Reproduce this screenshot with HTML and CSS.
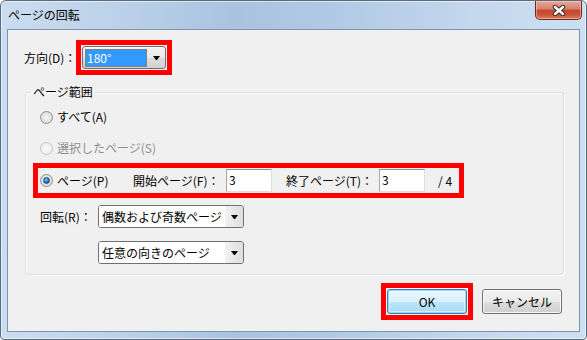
FILE: index.html
```html
<!DOCTYPE html>
<html lang="ja">
<head>
    <meta charset="UTF-8">
    <title>ページの回転</title>
    <link rel="stylesheet" href="styles.css">
</head>
<body>
    <div class="window">
        <div class="titlebar">
            <span class="title">ページの回転</span>
            <div class="close-btn">
                <svg width="16" height="11" viewBox="0 0 16 11">
                    <path d="M4 2 L12 9 M12 2 L4 9" stroke="#3b2a2a" stroke-width="4.4" stroke-linecap="round" fill="none"/>
                    <path d="M4 2 L12 9 M12 2 L4 9" stroke="#ffffff" stroke-width="2.4" stroke-linecap="round" fill="none"/>
                </svg>
            </div>
        </div>
        <div class="client">
            <div class="dir-row">
                <span class="dir-label">方向(D)：</span>
                <div class="mark">
                    <div class="combo combo-focus">
                        <span class="combo-value"><span class="sel">180°</span></span>
                        <span class="combo-arrow"></span>
                    </div>
                </div>
            </div>

            <fieldset class="group">
                <legend>ページ範囲</legend>
                <div class="radio-row">
                    <span class="radio"></span>
                    <span>すべて(A)</span>
                </div>
                <div class="radio-row disabled">
                    <span class="radio"></span>
                    <span>選択したページ(S)</span>
                </div>
                <div class="mark range-mark">
                    <div class="range-row">
                        <span class="radio-item">
                            <span class="radio checked"></span>
                            <span>ページ(P)</span>
                        </span>
                        <span class="field-label">開始ページ(F)：</span>
                        <span class="textbox">3</span>
                        <span class="field-label end-label">終了ページ(T)：</span>
                        <span class="textbox">3</span>
                        <span class="page-total">/ 4</span>
                    </div>
                </div>
                <div class="rot-row">
                    <span class="rot-label">回転(R)：</span>
                    <div class="combo select">
                        <span class="combo-value">偶数および奇数ページ</span>
                        <span class="combo-arrow"></span>
                    </div>
                </div>
                <div class="rot-row rot-row2">
                    <div class="combo select">
                        <span class="combo-value">任意の向きのページ</span>
                        <span class="combo-arrow"></span>
                    </div>
                </div>
            </fieldset>

            <div class="buttons">
                <div class="mark ok-mark">
                    <button class="btn btn-default">OK</button>
                </div>
                <button class="btn">キャンセル</button>
            </div>
        </div>
    </div>
</body>
</html>
```

FILE: styles.css
```css
body {
    margin: 0;
    background: #ffffff;
    font-family: "Noto Sans CJK JP", "Noto Sans", sans-serif;
    font-size: 12px;
    line-height: 16px;
    color: #000;
    white-space: nowrap;
}
.window {
    width: 587px;
    height: 340px;
    box-sizing: border-box;
    display: flex;
    flex-direction: column;
    border: 1px solid #5a6b7e;
    border-radius: 6px 6px 4px 4px;
    background: linear-gradient(to right, #cadcf0 0%, #bdd3ea 18%, #a9c3df 40%, #b3cbe5 60%, #c3d7ed 80%, #cde0f2 100%);
    box-shadow: inset 0 0 0 1px rgba(255, 255, 255, 0.55);
}
.titlebar {
    height: 28px;
    display: flex;
    align-items: flex-start;
    justify-content: space-between;
    padding-left: 7px;
}
.title {
    margin-top: 6px;
}
.close-btn {
    width: 47px;
    height: 19px;
    margin-right: 4px;
    box-sizing: border-box;
    border: 1px solid #6e2a22;
    border-top: none;
    border-radius: 0 0 5px 5px;
    background: linear-gradient(#e6a89a 0%, #d5806c 45%, #c3472f 50%, #c95237 75%, #dc7f5f 100%);
    box-shadow: inset 0 0 0 1px rgba(255, 220, 210, 0.45);
    display: flex;
    align-items: center;
    justify-content: center;
}
.client {
    flex: 1;
    margin: 0 6px 7px;
    border: 1px solid #7f93aa;
    background: #f0f0f0;
    display: flex;
    flex-direction: column;
    padding-top: 10px;
}
.mark {
    border: 5px solid #ff0000;
    padding: 1px;
}
.dir-row {
    display: flex;
    align-items: center;
    padding-left: 16px;
}
.dir-label {
    width: 52px;
    flex-shrink: 0;
}

/* combo boxes */
.combo {
    box-sizing: border-box;
    height: 23px;
    border: 1px solid #707070;
    border-radius: 3px;
    display: flex;
    background: #fff;
    overflow: hidden;
}
.combo-focus {
    width: 84px;
    background: linear-gradient(#f4f4f4, #e9e9e9 50%, #dcdcdc 51%, #d2d2d2);
}
.combo-value {
    flex: 1;
    display: flex;
    align-items: center;
    overflow: hidden;
}
.combo-focus .combo-value {
    padding: 2px 0 1px 2px;
}
.sel {
    flex: 1;
    height: 18px;
    box-sizing: border-box;
    background: #3399ff;
    color: #fff;
    border: 1px dotted #c86a1c;
    padding-left: 1px;
    line-height: 16px;
}
.combo-arrow {
    width: 18px;
    flex-shrink: 0;
    display: flex;
    align-items: center;
    justify-content: center;
}
.combo-arrow::after {
    content: "";
    width: 1px;
    height: 0;
    border-top: 4px solid #000;
    border-left: 3px solid transparent;
    border-right: 3px solid transparent;
}
.select {
    width: 146px;
}
.select .combo-value {
    padding-left: 3px;
    background: #fff;
}
.select .combo-arrow {
    background: linear-gradient(to right, #f2f2f2, #dedede);
}

/* group box */
.group {
    margin: 9px 15px 0 17px;
    padding: 9px 0 10px 7px;
    border: 1px solid #d5dfe5;
    border-radius: 3px;
    box-shadow: 1px 1px 0 #fff, inset 1px 1px 0 #fff;
}
.group legend {
    padding: 0 2px;
    margin-left: -2px;
    line-height: 16px;
}
.radio-row {
    display: flex;
    align-items: center;
    height: 16px;
    padding-left: 7px;
    gap: 4px;
}
.radio-row + .radio-row {
    margin-top: 15px;
}
.radio-row.disabled {
    color: #8d8d8d;
}
.radio {
    width: 13px;
    height: 13px;
    box-sizing: border-box;
    border-radius: 50%;
    border: 1px solid #8e8f8f;
    background: radial-gradient(circle at 50% 50%, #f6f6f6 0, #e6e6e6 45%, #cfcfcf 100%);
    display: flex;
    align-items: center;
    justify-content: center;
}
.disabled .radio {
    border-color: #c5c5c5;
    background: radial-gradient(circle, #f8f8f8, #ececec);
}
.radio.checked::after {
    content: "";
    width: 5px;
    height: 5px;
    border-radius: 50%;
    background: radial-gradient(circle at 40% 35%, #9fd4ff 0, #2a7fd0 45%, #0b3f7c 100%);
    border: 1px solid #1d4f86;
}
.range-mark {
    margin-top: 7px;
    width: 418px;
    padding: 1px 1px 1px 2px;
}
.range-row {
    display: flex;
    align-items: center;
    height: 23px;
}
.radio-item {
    width: 93px;
    display: flex;
    align-items: center;
    gap: 4px;
}
.field-label {
    width: 93px;
}
.end-label {
    margin-left: 14px;
}
.textbox {
    box-sizing: border-box;
    width: 46px;
    height: 23px;
    background: #fff;
    border: 1px solid #dcdfe6;
    border-top-color: #8f9196;
    border-left-color: #a6a8ad;
    padding-left: 2px;
    line-height: 20px;
}
.page-total {
    margin-left: 13px;
}
.rot-row {
    display: flex;
    align-items: center;
    padding-left: 7px;
    margin-top: 7px;
}
.rot-label {
    width: 58px;
}
.rot-row2 {
    margin-top: 13px;
    padding-left: 65px;
}

/* buttons */
.buttons {
    display: flex;
    justify-content: flex-end;
    align-items: center;
    gap: 9px;
    margin-top: 8px;
    padding-right: 17px;
}
.btn {
    width: 80px;
    height: 25px;
    box-sizing: border-box;
    font-family: inherit;
    font-size: 12px;
    color: #000;
    border: 1px solid #707070;
    border-radius: 3px;
    background: linear-gradient(#f2f2f2 0%, #ebebeb 50%, #dddddd 51%, #cfcfcf 100%);
    box-shadow: inset 0 0 0 1px rgba(255, 255, 255, 0.8);
    padding: 0;
    display: block;
}
.btn-default {
    border-color: #3c7fb1;
    background: linear-gradient(#eaf6fd 0%, #d9f0fc 50%, #bee6fd 51%, #a7d9f5 100%);
    box-shadow: inset 0 0 0 1px #8fd6f7, inset 0 0 0 2px rgba(255, 255, 255, 0.5);
}
```
